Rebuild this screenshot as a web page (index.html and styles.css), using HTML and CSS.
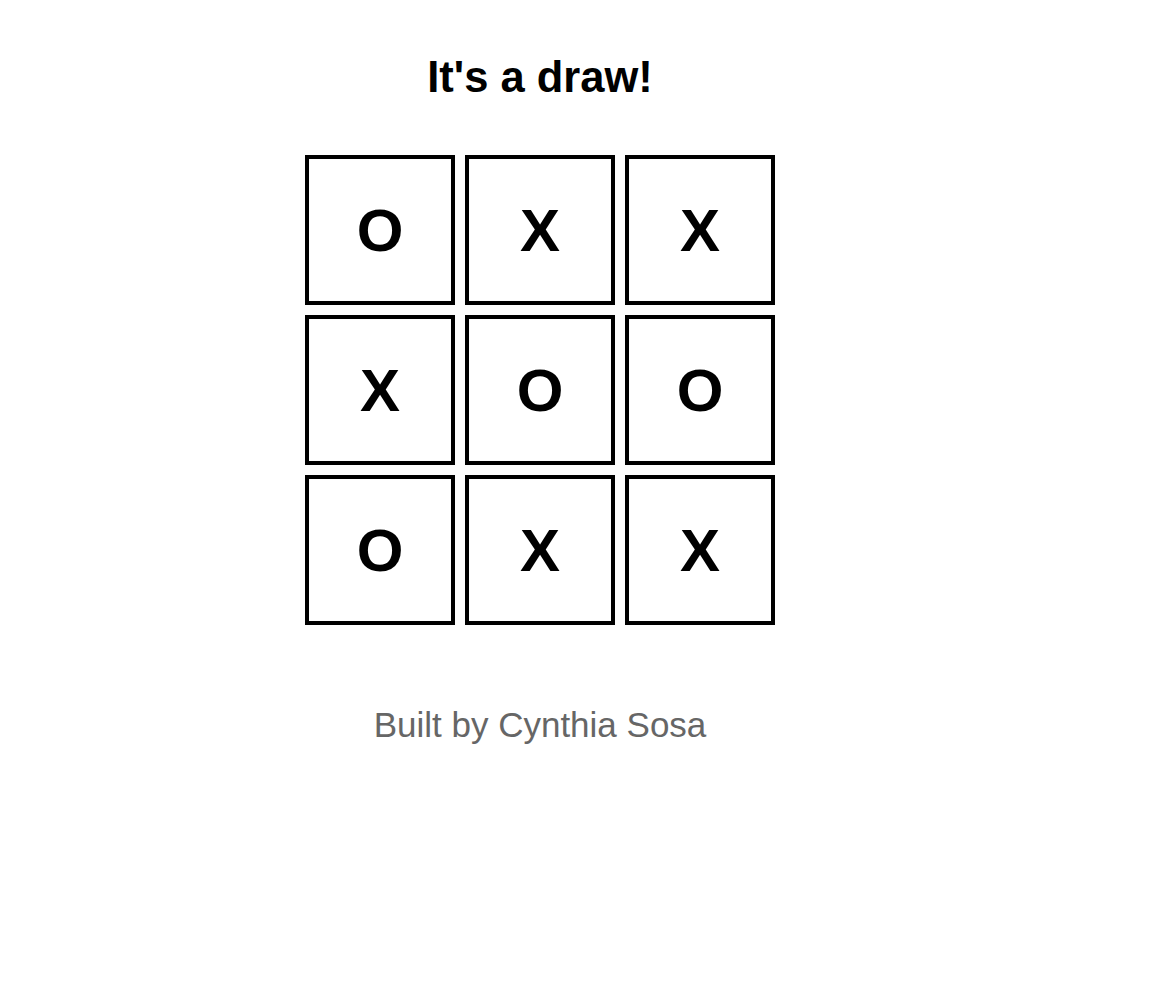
FILE: index.html
```html
<!DOCTYPE html>
<html lang="en">
<head>
<meta charset="utf-8">
<title>Tic Tac Toe</title>
<link rel="stylesheet" href="styles.css">
</head>
<body>
<main class="app">
  <h1 class="status">It's a draw!</h1>
  <div class="board">
    <button class="cell">O</button>
    <button class="cell">X</button>
    <button class="cell">X</button>
    <button class="cell">X</button>
    <button class="cell">O</button>
    <button class="cell">O</button>
    <button class="cell">O</button>
    <button class="cell">X</button>
    <button class="cell">X</button>
  </div>
  <footer class="credit">Built by Cynthia Sosa</footer>
</main>
</body>
</html>
```
FILE: styles.css
```css
html, body {
  margin: 0;
  padding: 0;
  background: #fff;
}
body {
  font-family: "Liberation Sans", Arial, sans-serif;
  color: #000;
}
.app {
  width: 1080px;
  display: flex;
  flex-direction: column;
  align-items: center;
}
.status {
  margin: 53px 0 0;
  font-size: 43.5px;
  font-weight: bold;
  line-height: 49px;
  height: 49px;
}
.board {
  margin-top: 53px;
  display: grid;
  grid-template-columns: repeat(3, 150px);
  grid-template-rows: repeat(3, 150px);
  gap: 10px;
}
.cell {
  box-sizing: border-box;
  width: 150px;
  height: 150px;
  border: 4px solid #000;
  background: #fff;
  font-family: "Liberation Sans", Arial, sans-serif;
  font-weight: bold;
  font-size: 60px;
  color: #000;
  padding: 0;
  margin: 0;
  display: flex;
  align-items: center;
  justify-content: center;
}
.credit {
  margin-top: 80px;
  font-size: 35px;
  line-height: 40px;
  color: #666;
}
```
